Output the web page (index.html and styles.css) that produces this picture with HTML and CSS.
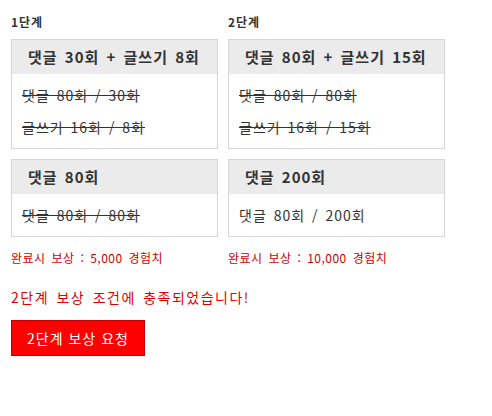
FILE: index.html
```html
<!DOCTYPE html>
<html lang="ko">

<head>
	<meta charset="UTF-8">
	<meta name="viewport" content="width=device-width, initial-scale=1.0">
	<title>단계별 보상</title>
	<link rel="stylesheet" href="styles.css">
</head>

<body>
	<div class="stages">
		<div class="stage-label">1단계</div>
		<div class="stage-label">2단계</div>

		<div class="mission">
			<div class="mission-title">댓글 30회 + 글쓰기 8회</div>
			<div class="mission-body">
				<p class="done">댓글 80회 / 30회</p>
				<p class="done">글쓰기 16회 / 8회</p>
			</div>
		</div>
		<div class="mission">
			<div class="mission-title">댓글 80회 + 글쓰기 15회</div>
			<div class="mission-body">
				<p class="done">댓글 80회 / 80회</p>
				<p class="done">글쓰기 16회 / 15회</p>
			</div>
		</div>

		<div class="mission">
			<div class="mission-title">댓글 80회</div>
			<div class="mission-body">
				<p class="done">댓글 80회 / 80회</p>
			</div>
		</div>
		<div class="mission">
			<div class="mission-title">댓글 200회</div>
			<div class="mission-body">
				<p>댓글 80회 / 200회</p>
			</div>
		</div>

		<div class="reward">완료시 보상 : 5,000 경험치</div>
		<div class="reward">완료시 보상 : 10,000 경험치</div>
	</div>

	<p class="notice">2단계 보상 조건에 충족되었습니다!</p>
	<button class="claim">2단계 보상 요청</button>
</body>

</html>
```

FILE: styles.css
```css
body {
	font-family: "Noto Sans CJK KR", "Noto Sans", sans-serif;
	color: #333;
	margin: 0;
	padding: 11px;
	background-color: #fff;
}

.stages {
	display: grid;
	grid-template-columns: 207px 217px;
	column-gap: 10px;
	row-gap: 10px;
}

.stage-label {
	font-size: 12px;
	font-weight: bold;
	letter-spacing: 1px;
	line-height: 22px;
	margin-bottom: -4px;
}

.mission {
	border: 1px solid #d5d5d5;
	background-color: #fff;
}

.mission-title {
	background-color: #ebebeb;
	font-size: 15px;
	font-weight: bold;
	letter-spacing: 1px;
	word-spacing: 2px;
	line-height: 34px;
	padding: 0 16px;
	white-space: nowrap;
}

.mission-body {
	padding: 5px 10px;
}

.mission-body p {
	margin: 0;
	font-size: 14px;
	letter-spacing: 1px;
	word-spacing: 2px;
	line-height: 32px;
	white-space: nowrap;
}

.mission-body .done {
	text-decoration: line-through;
}

.reward {
	font-size: 12px;
	color: #cc0000;
	letter-spacing: 0.5px;
	word-spacing: 2px;
	line-height: 22px;
}

.notice {
	font-size: 14px;
	color: #dd0000;
	letter-spacing: 1.5px;
	word-spacing: 2px;
	margin: 18px 0 13px;
	line-height: 20px;
}

.claim {
	font-family: inherit;
	font-size: 14px;
	color: #fff;
	letter-spacing: 1px;
	background-color: #ff0000;
	border: 1px solid #c00000;
	padding: 0 15px;
	height: 36px;
	cursor: pointer;
}
```
